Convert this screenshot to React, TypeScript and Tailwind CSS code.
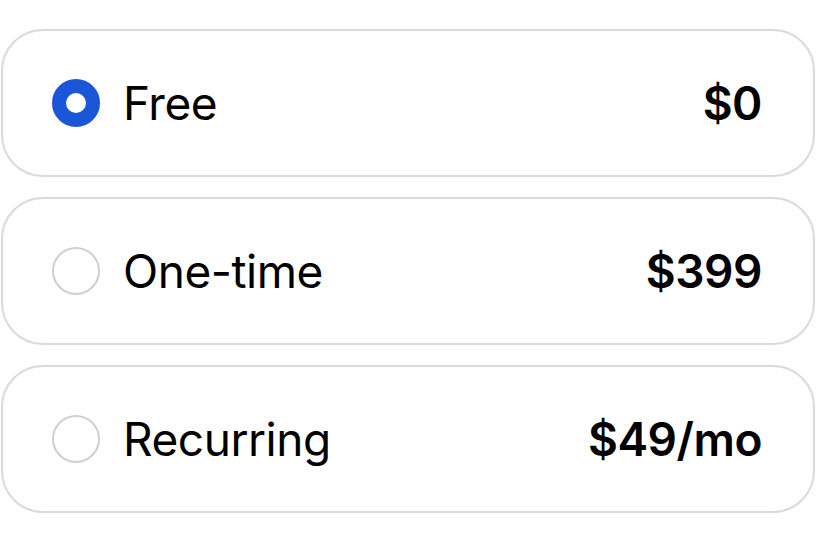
import { useState } from "react";

const plans = [
  { id: "free", label: "Free", price: "$0" },
  { id: "one-time", label: "One-time", price: "$399" },
  { id: "recurring", label: "Recurring", price: "$49/mo" },
];

const App = () => {
  const [selected, setSelected] = useState("free");

  return (
    <div
      className="flex h-[544px] w-[816px] flex-col gap-[20px] bg-white px-px pt-[29px]"
      style={{ fontFamily: "Inter, 'Liberation Sans', sans-serif" }}
    >
      {plans.map((plan) => {
        const isSelected = plan.id === selected;
        return (
          <button
            key={plan.id}
            type="button"
            onClick={() => setSelected(plan.id)}
            className="flex h-[148px] w-full items-center justify-between rounded-[42px] border-2 border-[#d9d9de] bg-white pr-[51px] pl-[49px] text-black"
          >
            <div className="flex items-center gap-[23px]">
              {isSelected ? (
                <span className="h-[48px] w-[48px] rounded-full border-[14px] border-[#1b56d9] bg-white" />
              ) : (
                <span className="h-[48px] w-[48px] rounded-full border-2 border-[#d0d0d0] bg-white" />
              )}
              <span className="text-[46px] leading-none tracking-[-0.01em]">
                {plan.label}
              </span>
            </div>
            <span className="text-[46px] leading-none font-semibold tracking-[-0.01em]">
              {plan.price}
            </span>
          </button>
        );
      })}
    </div>
  );
};

export default App;
